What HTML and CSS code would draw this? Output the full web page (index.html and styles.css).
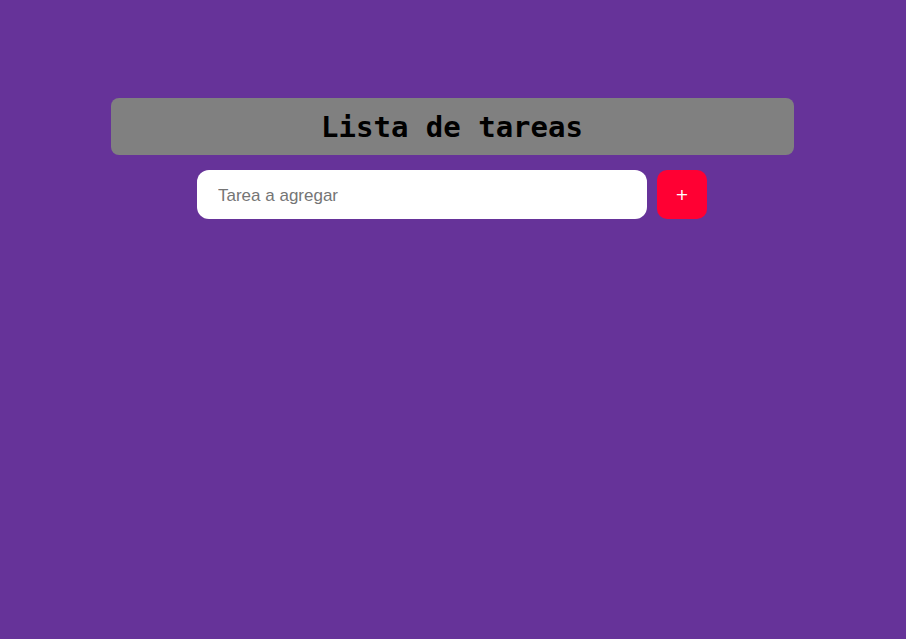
FILE: index.html
```html
<!DOCTYPE html>
<html lang="es">
<head>
<meta charset="utf-8">
<title>Lista de tareas</title>
<link rel="stylesheet" href="styles.css">
</head>
<body>
<main class="app">
  <header class="app-header">
    <h1 class="app-title">Lista de tareas</h1>
  </header>
  <form class="add-form">
    <input class="add-input" type="text" placeholder="Tarea a agregar">
    <button class="add-button" type="button">+</button>
  </form>
</main>
</body>
</html>
```

FILE: styles.css
```css
html, body {
  margin: 0;
  padding: 0;
  background: #663399;
  height: 100%;
}

.app {
  display: flex;
  flex-direction: column;
  align-items: center;
  padding-top: 98px;
  gap: 15px;
}

.app-header {
  width: 683px;
  height: 57px;
  background: #808080;
  border-radius: 8px;
  display: flex;
  align-items: center;
  justify-content: center;
  margin-right: 2px;
}

.app-title {
  margin: 0;
  font-family: "DejaVu Sans Mono", monospace;
  font-weight: bold;
  font-size: 29px;
  color: #000;
}

.add-form {
  display: flex;
  gap: 10px;
  margin-right: 2px;
}

.add-input {
  width: 450px;
  height: 49px;
  box-sizing: border-box;
  border: none;
  border-radius: 12px;
  background: #fff;
  padding: 2px 21px 0;
  font-family: "Liberation Sans", sans-serif;
  font-size: 17px;
  outline: none;
}

.add-input::placeholder {
  color: #757575;
}

.add-button {
  width: 50px;
  height: 49px;
  border: none;
  border-radius: 10px;
  background: #ff0033;
  color: #fff;
  font-family: "DejaVu Sans", sans-serif;
  font-size: 16px;
  padding: 0;
}
```
